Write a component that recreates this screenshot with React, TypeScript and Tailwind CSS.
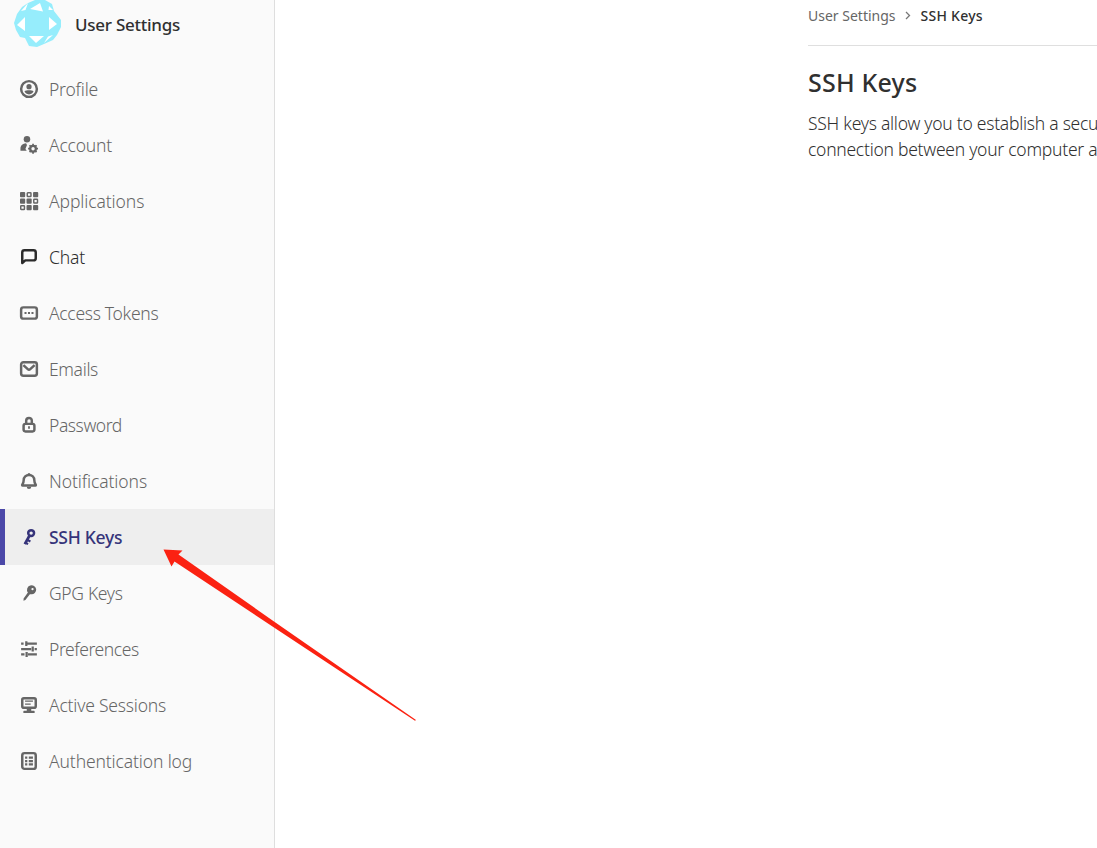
import type { ReactNode } from 'react';

type Item = { label: string; icon: ReactNode; tone?: 'dark' | 'active'; spacing: string };

const stroke = { fill: 'none', stroke: 'currentColor', strokeWidth: 2.2 } as const;

const gridCells = [0, 1, 2].flatMap((r) => [0, 1, 2].map((c) => ({ r, c })));
const hollow = ['0-1', '1-2', '2-0'];

const items: Item[] = [
  {
    label: 'Profile',
    spacing: 'tracking-[-0.2px]',
    icon: (
      <>
        <circle cx="8" cy="8" r="7" {...stroke} />
        <circle cx="8" cy="5.9" r="2.3" />
        <path d="M4 10.1c.8-.9 2.300-1.100 4-1.100s3.200.2 4 1.100c-.6 1.700-2 2.700-4 2.700s-3.400-1-4-2.700z" />
      </>
    ),
  },
  {
    label: 'Account',
    spacing: 'tracking-[-0.2px]',
    icon: (
      <>
        <circle cx="6.200" cy="2.900" r="2.900" />
        <path d="M.4 13.200V11.400c0-2.900 2.200-4.800 5-4.900L6.200 8l-1.400 3.600 1.200 1.600z" />
        <circle cx="11.600" cy="11.300" r="2.500" {...stroke} strokeWidth="2" />
        <path d="M11.600 6.900v2M11.600 13.700v2M7.200 11.300h2M14 11.300h2M8.500 8.200l1.400 1.400M13.300 13l1.400 1.400M14.700 8.200l-1.400 1.400M9.900 13l-1.400 1.400" {...stroke} strokeWidth="1.500" />
      </>
    ),
  },
  {
    label: 'Applications',
    spacing: 'tracking-[-0.1px]',
    icon: (
      <>
        {gridCells.map(({ r, c }) =>
          hollow.includes(`${r}-${c}`) ? (
            <rect key={`${r}-${c}`} x={c * 5.8 + 0.65} y={r * 5.8 + 0.65} width="3.300" height="3.300" rx=".5" {...stroke} strokeWidth="1.300" />
          ) : (
            <rect key={`${r}-${c}`} x={c * 5.8} y={r * 5.8} width="4.600" height="4.600" rx=".8" />
          ),
        )}
      </>
    ),
  },
  {
    label: 'Chat',
    tone: 'dark',
    spacing: 'tracking-[-0.17px]',
    icon: <path d="M2 13.300V4a2 2 0 0 1 2-2h8a2 2 0 0 1 2 2v5a2 2 0 0 1-2 2H4.700z" {...stroke} strokeLinejoin="round" />,
  },
  {
    label: 'Access Tokens',
    spacing: 'tracking-[-0.3px]',
    icon: (
      <>
        <rect x="1" y="3" width="14" height="10" rx="2" {...stroke} />
        <path d="M4 7h1.800v1.800H4zM7.100 7h1.800v1.800H7.100zM10.200 7H12v1.800h-1.800z" />
      </>
    ),
  },
  {
    label: 'Emails',
    spacing: 'tracking-[-0.35px]',
    icon: (
      <>
        <rect x="1" y="2" width="14" height="12" rx="2" {...stroke} />
        <path d="M3 4.500l3.900 3.700a1.600 1.600 0 0 0 2.200 0L13 4.500" {...stroke} />
      </>
    ),
  },
  {
    label: 'Password',
    spacing: 'tracking-[-0.43px]',
    icon: (
      <>
        <rect x="3.200" y="7" width="9.600" height="6.700" rx="1.600" {...stroke} />
        <path d="M5.500 7V4.200a2.500 2.500 0 0 1 5 0V7" {...stroke} />
        <path d="M7.200 9.200h1.600v2.200H7.200z" />
      </>
    ),
  },
  {
    label: 'Notifications',
    spacing: 'tracking-[-0.1px]',
    icon: (
      <>
        <path d="M2.200 12h11.600c.3 0 .4-.4.2-.7-.9-1.200-1.300-2.200-1.300-4.100 0-2.700-2-4.600-4.700-4.600S3.300 4.500 3.300 7.200c0 1.900-.4 2.900-1.300 4.100-.2.300-.1.700.2.700z" {...stroke} strokeLinejoin="round" />
        <path d="M7 1h2v2H7zM6 13h4a2 2 0 0 1-4 0z" />
      </>
    ),
  },
  {
    label: 'SSH Keys',
    tone: 'active',
    spacing: 'tracking-[-0.28px]',
    icon: (
      <>
        <circle cx="9.900" cy="4.500" r="2.600" {...stroke} strokeWidth="2.200" />
        <path d="M8.300 7L4.300 14.300" {...stroke} strokeWidth="2.500" />
        <path d="M6.600 9.500l3.100 1.600-.9 1.700-3.100-1.600zM4.600 12l3 1.500-.8 1.500-3-1.500z" />
      </>
    ),
  },
  {
    label: 'GPG Keys',
    spacing: 'tracking-[-0.33px]',
    icon: (
      <path
        fillRule="evenodd"
        d="M9 1.400a4 4 0 1 1 .8 7.700l-1-.1-4 5.200-1.700.6.100-2L7 7.600A4 4 0 0 1 9 1.400zM11.100 3.600a1 1 0 1 0 .1 2 1 1 0 0 0-.1-2z"
      />
    ),
  },
  {
    label: 'Preferences',
    spacing: 'tracking-[-0.43px]',
    icon: (
      <>
        <path d="M1 3.200h2.200M6 3.200h9M1 8h9M13 8h2M1 12.800h3M7 12.800h8" {...stroke} strokeWidth="2" />
        <path d="M4.600 1h2v4.400h-2zM10.300 5.800h2v4.400h-2zM4.900 10.600h2V15h-2z" />
      </>
    ),
  },
  {
    label: 'Active Sessions',
    spacing: 'tracking-[-0.2px]',
    icon: (
      <>
        <rect x="2" y="2" width="12" height="8.400" rx="1.400" {...stroke} />
        <path d="M4.500 4h7v1.200h-7zM4.500 6.600h5v1.200h-5zM6 11h4v2h2.500a.5.500 0 0 1 .5.500V15H3v-1.500a.5.500 0 0 1 .5-.5H6z" />
      </>
    ),
  },
  {
    label: 'Authentication log',
    spacing: 'tracking-[-0.13px]',
    icon: (
      <>
        <rect x="2" y="1" width="12" height="14" rx="2" {...stroke} />
        <path d="M4.500 4h2v2h-2zM7.800 4h3.700v2H7.800zM4.500 7h2v2h-2zM7.800 7h3.700v2H7.800zM4.500 10h2v2h-2zM7.800 10h3.700v2H7.800z" />
      </>
    ),
  },
];

const tones = {
  normal: 'text-[#666666]',
  dark: 'text-[#2b2b2b]',
  active: 'bg-[#eeeeee] text-[#36347a] border-[#4b48a8]',
};

function Avatar() {
  return (
    <svg className="size-[48px] shrink-0" viewBox="0 0 48 48">
      <path fill="#96edfc" d="M1 23L4 14L9 7L15 3L22 0H32L39 4L41 11L48 20V27L44 35L40 40L31 44L24 47L16 46L12 38L7 37L3 30Z" />
      <path fill="#fff" d="M17 9L27 3L30 11.500zM36 17L44 24L36 30zM16 36H31L23 43zM12 17V31L4 25zM8 11L15 3L12.500 10zM36 6L40 10L35.500 10zM40 35L35 36.500L31 43z" />
    </svg>
  );
}

export default function App() {
  return (
    <div className="relative flex h-[848px] w-full overflow-hidden bg-white font-['Noto_Sans','Open_Sans',sans-serif]">
      <aside className="flex w-[275px] shrink-0 flex-col border-r border-[#dedede] bg-[#fafafa]">
        <div className="flex h-[61px] items-start pl-[13px]">
          <Avatar />
          <h2 className="ml-[14px] mt-[11px] whitespace-nowrap text-[17px] font-medium leading-[27px] tracking-[-0.26px] text-[#303030]">User Settings</h2>
        </div>
        <nav className="flex flex-col">
          {items.map(({ label, icon, tone, spacing }) => (
            <a key={label} className={`flex h-14 items-center border-l-[5px] pl-[15px] ${tone === 'active' ? '' : 'border-transparent'} ${tones[tone ?? 'normal']}`}>
              <svg className="size-[18px] shrink-0 overflow-visible" viewBox="0 0 16 16" fill="currentColor">
                {icon}
              </svg>
              <span className={`ml-[11px] whitespace-nowrap text-[17.5px] leading-6 ${tone === 'active' ? 'font-medium' : 'font-[350]'} ${spacing}`}>{label}</span>
            </a>
          ))}
        </nav>
      </aside>
      <main className="ml-[533px] min-w-0 flex-1 overflow-hidden">
        <div className="flex h-[46px] items-start border-b border-[#dfdfdf] pt-[5px] text-[14px] leading-[22px]">
          <span className="whitespace-nowrap text-[#666666]">User Settings</span>
          <svg className="ml-[9px] mr-[10px] mt-[6px] h-[9px] w-[6px] shrink-0" viewBox="0 0 6 9" fill="none" stroke="#777" strokeWidth="1.300">
            <path d="M1 1l3.500 3.500L1 8" />
          </svg>
          <span className="whitespace-nowrap font-medium tracking-[0.25px] text-[#303030]">SSH Keys</span>
        </div>
        <h1 className="mt-[19px] whitespace-nowrap text-[25px] font-medium leading-[34px] tracking-[0.2px] text-[#303030]">SSH Keys</h1>
        <p className="mt-[11px] whitespace-nowrap text-[17.5px] font-[350] leading-[26px] tracking-[-0.26px] text-[#303030]">
          SSH keys allow you to establish a secu
          <br />
          connection between your computer a
        </p>
      </main>
      <svg className="pointer-events-none absolute left-[160px] top-[545px] h-[180px] w-[260px]" viewBox="160 545 260 180">
        <path fill="#fb2212" d="M163.500 549.500L182.500 550.500L178.500 554.500L274 621.500L416 720L415 720.800L274 627.500L174.500 561.500L171.500 566.500Z" />
      </svg>
    </div>
  );
}
